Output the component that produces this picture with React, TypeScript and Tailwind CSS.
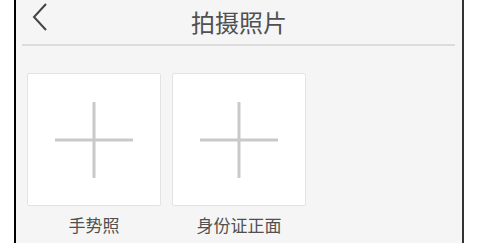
const font = { fontFamily: '"Noto Sans CJK SC", "Noto Sans", sans-serif' };

function Plus() {
  return (
    <svg width="80" height="80" viewBox="0 0 80 80">
      <path d="M1 40H79M40 2V78" stroke="#c9c9c9" strokeWidth="3" fill="none" />
    </svg>
  );
}

function PhotoSlot({ label }: { label: string }) {
  return (
    <div className="flex flex-col items-center">
      <div className="flex h-[133px] w-[134px] items-center justify-center rounded-[2px] border border-[#e3e3e3] bg-white">
        <Plus />
      </div>
      <div className="mt-[7px] text-[17px] leading-6 text-[#505050]">{label}</div>
    </div>
  );
}

export default function App() {
  return (
    <div className="flex h-[243px] w-[478px] overflow-hidden bg-white" style={font}>
      <div className="w-[14px]" />
      <div className="w-[2px] bg-black" />
      <div className="flex w-[446px] flex-col bg-[#f5f5f5]">
        <div className="grid h-[44px] grid-cols-[60px_1fr_60px] items-center">
          <svg width="20" height="30" viewBox="0 0 20 30" className="ml-[15px] mt-[2px] self-start">
            <path d="M15 2L3 15L15 28" stroke="#444" strokeWidth="2" fill="none" />
          </svg>
          <div className="text-center text-[24px] leading-none text-[#505050]">拍摄照片</div>
          <div />
        </div>
        <div className="ml-[6px] mr-[7px] h-[2px] bg-[#dcdcdc]" />
        <div className="flex gap-[11px] pl-[11px] pt-[27px]">
          <PhotoSlot label="手势照" />
          <PhotoSlot label="身份证正面" />
        </div>
      </div>
      <div className="w-[2px] bg-[#333]" />
    </div>
  );
}
